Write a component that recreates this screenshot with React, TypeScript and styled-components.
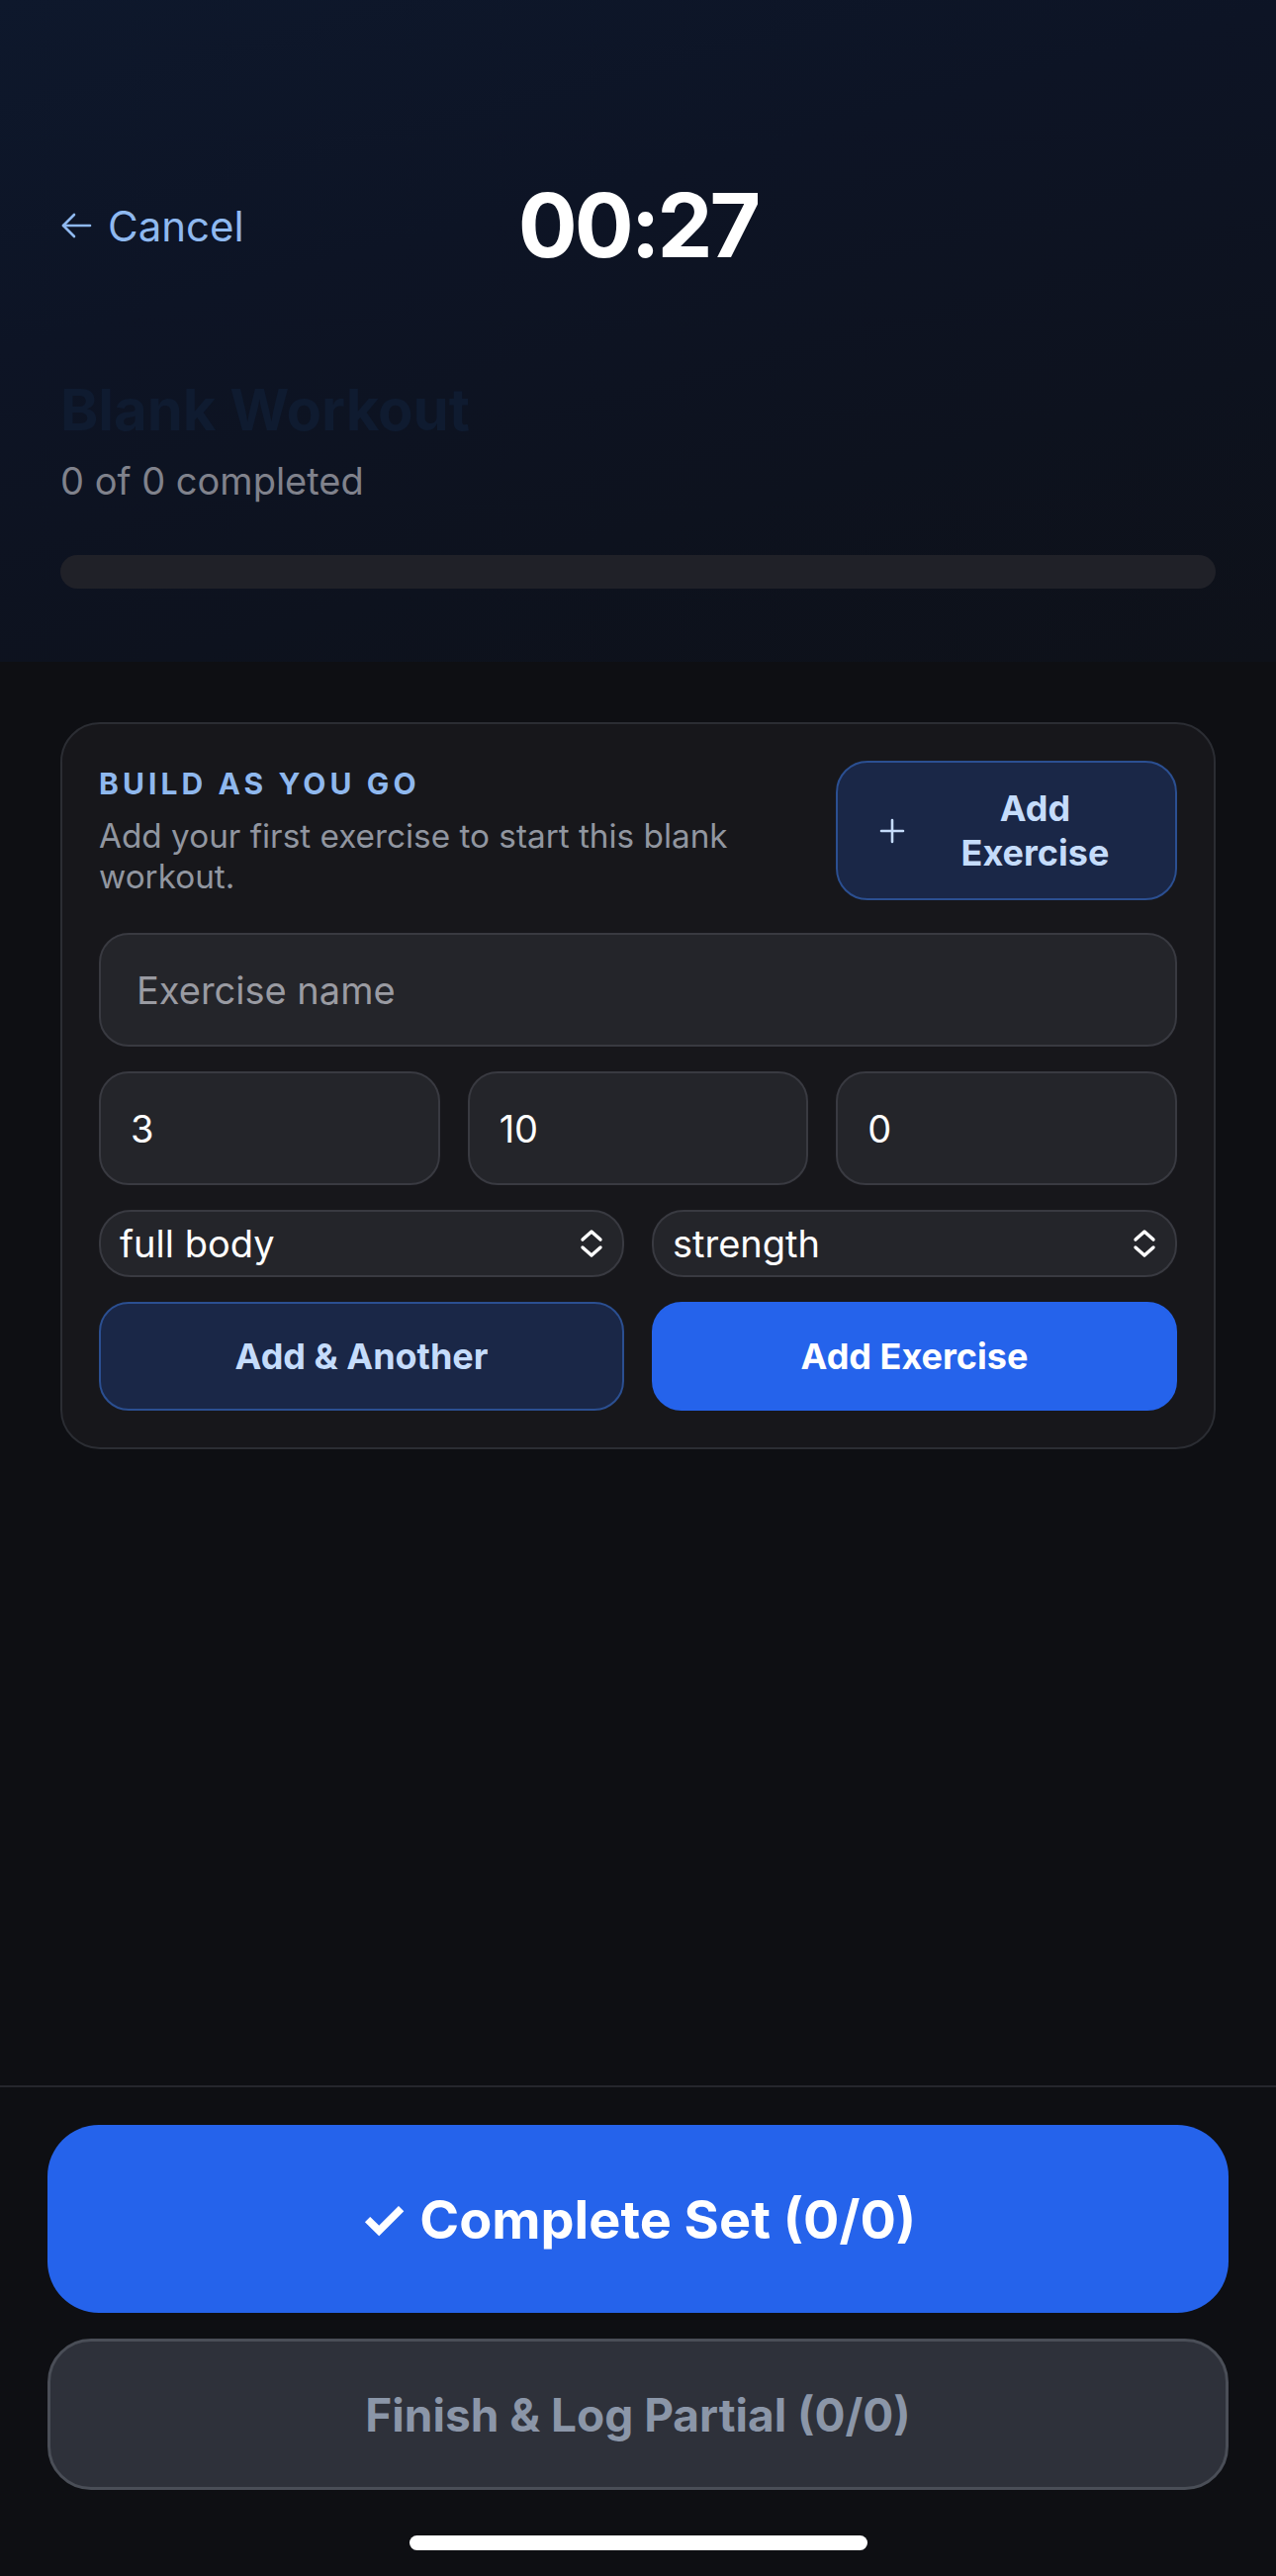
import React from "react";
import styled, { createGlobalStyle } from "styled-components";

const GlobalStyle = createGlobalStyle`
	* {
		box-sizing: border-box;
	}
	html,
	body {
		margin: 0;
		padding: 0;
		background: #0e0f13;
	}
	body {
		font-family: Inter, "Noto Sans", "DejaVu Sans", sans-serif;
		-webkit-font-smoothing: antialiased;
	}
	input,
	select,
	button {
		font-family: inherit;
	}
`;

const Page = styled.div`
	width: 1290px;
	min-height: 2604px;
	display: flex;
	flex-direction: column;
	background: #0e0f13;
`;

const Header = styled.header`
	height: 669px;
	padding: 171px 61px 0;
	background: linear-gradient(165deg, #0e182c 0%, #0d1425 35%, #0d121e 70%, #0e1119 100%);
	display: flex;
	flex-direction: column;
`;

const TopBar = styled.div`
	display: grid;
	grid-template-columns: 1fr auto 1fr;
	align-items: center;
	height: 114px;
`;

const CancelLink = styled.button`
	justify-self: start;
	display: flex;
	align-items: center;
	gap: 16px;
	padding: 0;
	background: none;
	border: none;
	color: #8fb9f0;
	font-size: 42px;
	font-weight: 400;
	cursor: pointer;
`;

const Timer = styled.div`
	color: #ffffff;
	font-size: 89px;
	font-weight: 700;
	letter-spacing: -3px;
	line-height: 1.21;
`;

const Title = styled.h1`
	margin: 94px 0 0;
	color: #0f1b30;
	font-size: 58px;
	font-weight: 700;
	line-height: 1.21;
`;

const Progress = styled.div`
	margin: 15px 0 0;
	color: #80828c;
	font-size: 38px;
	line-height: 1.21;
`;

const ProgressTrack = styled.div`
	margin-top: 51px;
	height: 34px;
	border-radius: 17px;
	background: #202128;
`;

const Main = styled.main`
	flex: 1;
	padding: 61px 61px 0;
`;

const Card = styled.section`
	border: 2px solid #2b2d33;
	border-radius: 40px;
	background: #17171b;
	padding: 37px;
	display: flex;
	flex-direction: column;
	gap: 25px;
`;

const CardTop = styled.div`
	display: flex;
	justify-content: space-between;
	align-items: flex-start;
	gap: 30px;
	margin-bottom: 8px;
`;

const CardIntro = styled.div`
	flex: 1;
	padding-top: 5px;
`;

const Eyebrow = styled.div`
	color: #8fb8ee;
	font-size: 30px;
	font-weight: 700;
	letter-spacing: 4.1px;
	line-height: 36px;
`;

const Hint = styled.p`
	margin: 15px 0 0;
	color: #9196a0;
	font-size: 33.3px;
	line-height: 41px;
`;

const GhostButton = styled.button`
	display: flex;
	align-items: center;
	justify-content: center;
	border: 2px solid #2b4f91;
	background: #1a2747;
	color: #c5dcfb;
	font-size: 36px;
	font-weight: 700;
	line-height: 45px;
	border-radius: 30px;
	cursor: pointer;
`;

const QuickAdd = styled(GhostButton)`
	flex: 0 0 345px;
	height: 141px;
	padding: 0 18px 0 42px;
	gap: 8px;
	border-radius: 32px;
	span {
		flex: 1;
		text-align: center;
	}
`;

const Field = styled.input`
	width: 100%;
	height: 115px;
	border: 2px solid #393a41;
	border-radius: 30px;
	background: #24252a;
	color: #ffffff;
	font-size: 38px;
	padding: 0 30px;
	outline: none;
	&::placeholder {
		color: #9a9ba2;
	}
`;

const NameField = styled(Field)`
	padding-left: 36px;
`;

const Row = styled.div<{ $cols: number }>`
	display: grid;
	grid-template-columns: repeat(${(p) => p.$cols}, 1fr);
	gap: 28px;
`;

const SelectBox = styled.div`
	height: 68px;
	border: 2px solid #393a41;
	border-radius: 32px;
	background: #24252a;
	display: flex;
	align-items: center;
	justify-content: space-between;
	padding: 0 18px 0 19px;
	color: #ffffff;
	font-size: 38px;
`;

const ActionButton = styled(GhostButton)<{ $primary?: boolean }>`
	height: 110px;
	width: 100%;
	${(p) =>
		p.$primary &&
		`
		background: #2563eb;
		border-color: #2563eb;
		color: #ffffff;
	`}
`;

const Footer = styled.footer`
	border-top: 2px solid #25262c;
	padding: 38px 48px 26px;
	display: flex;
	flex-direction: column;
	align-items: center;
`;

const CompleteButton = styled.button`
	width: 100%;
	height: 190px;
	border: none;
	border-radius: 52px;
	background: #2563eb;
	color: #ffffff;
	font-size: 54px;
	font-weight: 700;
	cursor: pointer;
`;

const PartialButton = styled.button`
	width: 100%;
	height: 153px;
	margin-top: 26px;
	border: 3px solid #4a4e57;
	border-radius: 44px;
	background: #2e313a;
	color: #8b96a8;
	font-size: 46px;
	font-weight: 700;
	cursor: pointer;
`;

const HomeIndicator = styled.div`
	margin-top: 46px;
	width: 463px;
	height: 15px;
	border-radius: 8px;
	background: #ffffff;
`;

const ArrowLeft = () => (
	<svg width="32" height="28" viewBox="0 0 32 28" fill="none" stroke="currentColor" strokeWidth="2.6" strokeLinecap="round" strokeLinejoin="round">
		<path d="M30 14H3" />
		<path d="M14 3L3 14l11 11" />
	</svg>
);

const Plus = () => (
	<svg width="26" height="26" viewBox="0 0 26 26" fill="none" stroke="currentColor" strokeWidth="2.6" strokeLinecap="round">
		<path d="M13 2v22M2 13h22" />
	</svg>
);

const UpDown = () => (
	<svg width="26" height="30" viewBox="0 0 26 30" fill="none" stroke="#ffffff" strokeWidth="3.4" strokeLinecap="round" strokeLinejoin="round">
		<path d="M4 11l9-8 9 8" />
		<path d="M4 19l9 8 9-8" />
	</svg>
);

const Select = ({ value }: { value: string }) => (
	<SelectBox>
		<span>{value}</span>
		<UpDown />
	</SelectBox>
);

export default function App() {
	return (
		<>
			<GlobalStyle />
			<Page>
				<Header>
					<TopBar>
						<CancelLink>
							<ArrowLeft />
							Cancel
						</CancelLink>
						<Timer>00:27</Timer>
						<div />
					</TopBar>
					<Title>Blank Workout</Title>
					<Progress>0 of 0 completed</Progress>
					<ProgressTrack />
				</Header>

				<Main>
					<Card>
						<CardTop>
							<CardIntro>
								<Eyebrow>BUILD AS YOU GO</Eyebrow>
								<Hint>Add your first exercise to start this blank workout.</Hint>
							</CardIntro>
							<QuickAdd>
								<Plus />
								<span>
									Add
									<br />
									Exercise
								</span>
							</QuickAdd>
						</CardTop>
						<NameField placeholder="Exercise name" />
						<Row $cols={3}>
							<Field defaultValue="3" />
							<Field defaultValue="10" />
							<Field defaultValue="0" />
						</Row>
						<Row $cols={2}>
							<Select value="full body" />
							<Select value="strength" />
						</Row>
						<Row $cols={2}>
							<ActionButton>Add &amp; Another</ActionButton>
							<ActionButton $primary>Add Exercise</ActionButton>
						</Row>
					</Card>
				</Main>

				<Footer>
					<CompleteButton>✓ Complete Set (0/0)</CompleteButton>
					<PartialButton>Finish &amp; Log Partial (0/0)</PartialButton>
					<HomeIndicator />
				</Footer>
			</Page>
		</>
	);
}
